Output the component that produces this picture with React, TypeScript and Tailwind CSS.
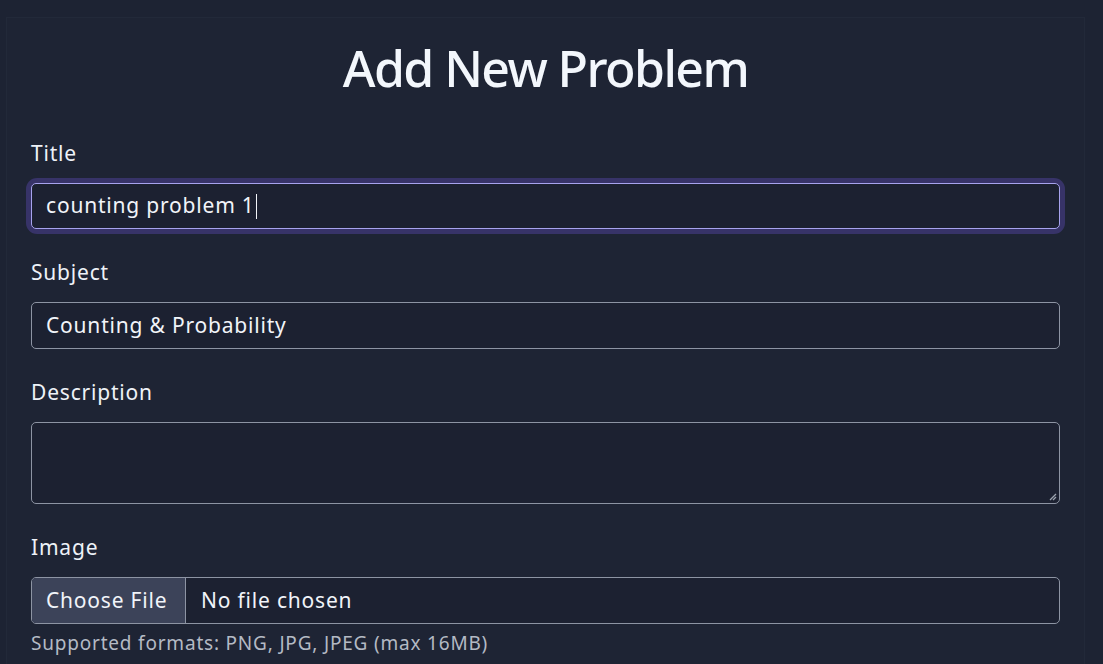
import React from 'react'

const FONT = "font-['Noto_Sans','IBM_Plex_Sans',sans-serif]"
const BODY = 'text-[21px] tracking-[0.8px]'

function Label({ children }: { children: React.ReactNode }) {
  return <div className={`mb-[15px] h-[30px] leading-[30px] text-[#eef2f8] ${BODY}`}>{children}</div>
}

export default function App() {
  return (
    <div className={`min-h-[664px] bg-[#1d2333] ${FONT}`}>
      <div className="ml-[6px] pt-[17px]">
        <div className="w-[1079px] border border-[#222939] bg-[#1e2434] px-[24px] pt-[20px] pb-[40px]">
          <h1 className="mb-[40px] h-[60px] text-center text-[50px] leading-[60px] font-medium tracking-[-1.6px] text-[#f3f7fc]">
            Add New Problem
          </h1>

          <Label>Title</Label>
          <div className="rounded-[6px] shadow-[0_0_0_5px_#373368]">
            <div className={`flex h-[46px] items-center rounded-[5px] border border-[#a7a3ee] bg-[#1c2131] px-[14px] text-[#f1f4f9] ${BODY}`}>
              counting problem 1
              <span className="ml-[1px] inline-block h-[25px] w-px bg-[#f1f4f9]" />
            </div>
          </div>

          <div className="mt-[28px]">
            <Label>Subject</Label>
            <div className={`flex h-[47px] items-center rounded-[5px] border border-[#8d94a3] bg-[#1c2131] px-[14px] text-[#f1f4f9] ${BODY}`}>
              Counting &amp; Probability
            </div>
          </div>

          <div className="mt-[28px]">
            <Label>Description</Label>
            <div className="relative h-[82px] rounded-[5px] border border-[#8d94a3] bg-[#1c2131]">
              <svg className="absolute right-[2px] bottom-[2px]" width="9" height="9" viewBox="0 0 9 9">
                <path d="M8 2 L2 8 M8 5 L5 8" stroke="#9ca3af" strokeWidth="1.3" />
              </svg>
            </div>
          </div>

          <div className="mt-[28px]">
            <Label>Image</Label>
            <div className={`flex h-[47px] items-stretch overflow-hidden rounded-[5px] border border-[#8d94a3] bg-[#1c2131] text-[#f1f4f9] ${BODY}`}>
              <div className="flex w-[154px] shrink-0 items-center border-r border-[#8d94a3] bg-[#3c4359] px-[14px]">Choose File</div>
              <div className="flex items-center px-[15px]">No file chosen</div>
            </div>
            <div className="mt-[6px] text-[19px] leading-[26px] tracking-[0.8px] text-[#b4bac4]">
              Supported formats: PNG, JPG, JPEG (max 16MB)
            </div>
          </div>
        </div>
      </div>
    </div>
  )
}
